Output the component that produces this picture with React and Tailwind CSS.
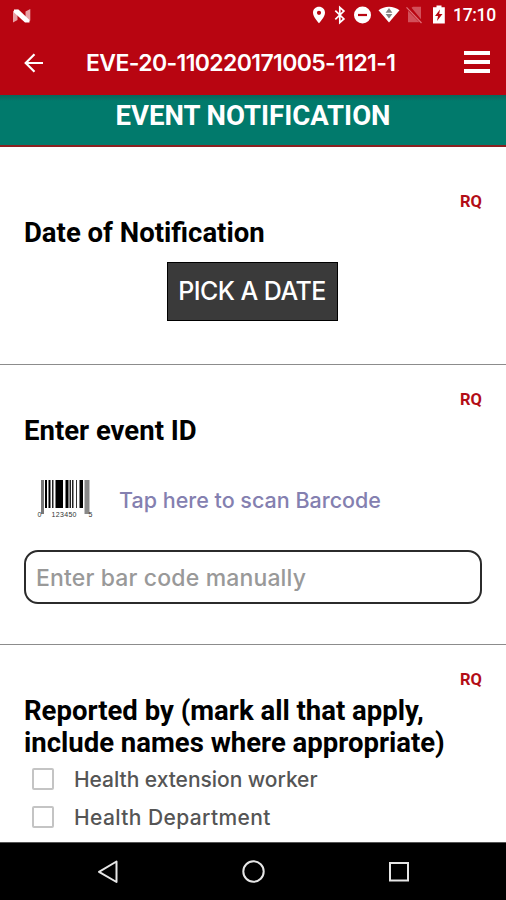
import React from "react";

function StatusBar() {
  return (
    <div className="flex h-[30px] items-center pl-[13px] text-white">
      <svg width="18" height="14" viewBox="0 0 18 14" className="mt-px">
        <path d="M0 2 4.500.5V11L0 13.500zM12.500 2.500l4.800-2.500v11.500l-4.800 1.500z" fill="#e8a0a5" />
        <path d="M1 .5h4.500L16.500 11v2.500H12L1 3.500z" fill="#fff" />
      </svg>
      <svg width="134" height="22" viewBox="312 4 134 22" className="ml-[281px]">
        <path d="M319 6.800c-3.400 0-6 2.600-6 5.900 0 4.300 6 10.500 6 10.500s6-6.200 6-10.500c0-3.300-2.600-5.900-6-5.900zm0 3.900a2.100 2.100 0 1 1 0 4.200 2.100 2.100 0 0 1 0-4.200z" fill="#fff" fillRule="evenodd" />
        <path d="M335.300 10.700l8.600 8.300-4.100 3.700V7.300l4.100 3.700-8.600 8.300" fill="none" stroke="#fff" strokeWidth="1.700" />
        <circle cx="362.500" cy="15" r="8.500" fill="#fff" />
        <rect x="358" y="13.900" width="9" height="2.200" fill="#b80511" />
        <path d="M378.500 10.200c6-4.700 15-4.700 21 0L389 22.500z" fill="#fff" />
        <path d="M389 8l3.400 4.800h-6.800zM389 18.500l3.400-4.500h-6.800z" fill="#858383" />
        <path d="M411.500 7.800l1.500-1h8v12.500zM408 10.800l11.500 11.400H408z" fill="#d2505a" />
        <path d="M406.500 7.300l15 15.700" stroke="#df7078" strokeWidth="1.200" />
        <path d="M433 7.300h3.500V5.500h5v1.800h3.300v16.200H433z" fill="#fff" />
        <path d="M440 9.500l-5 6.500h3l-1 5 5.500-7h-3.300z" fill="#b80511" />
      </svg>
      <span className="ml-[7px] font-['Roboto',sans-serif] text-[17.500px] font-medium leading-[30px] tracking-[-0.300px]">17:10</span>
    </div>
  );
}

function AppBar() {
  return (
    <div className="flex h-[65px] items-center pl-6 pr-4 text-white">
      <svg width="20" height="20" viewBox="0 0 20 20" fill="none" stroke="#fff" strokeWidth="2.200">
        <path d="M19 10H1.700M10.500 1.200L1.700 10l8.800 8.800" />
      </svg>
      <h1 className="ml-[42px] flex-1 whitespace-nowrap text-[23px] font-semibold leading-8 tracking-[-0.620px]">EVE-20-110220171005-1121-1</h1>
      <div className="-mt-0.5 flex w-[26px] flex-col gap-[5px]">
        <div className="h-1 bg-white" />
        <div className="h-1 bg-white" />
        <div className="h-1 bg-white" />
      </div>
    </div>
  );
}

function Required() {
  return <div className="text-right font-['Roboto',sans-serif] text-[16.500px] font-bold leading-5 text-[#b30d17]">RQ</div>;
}

function Question({ children }) {
  return <h2 className="whitespace-nowrap font-['Roboto',sans-serif] text-[27.500px] font-bold leading-[32px] text-black">{children}</h2>;
}

const bars = [
  [41, 3, 34, "#777"], [45, 2, 28, "#000"], [48.500, 2, 28, "#000"], [52, 1.500, 28, "#222"], [55.500, 7.500, 28, "#000"],
  [65.500, 3, 28, "#000"], [69.500, 1.500, 28, "#222"], [72, 1.500, 28, "#222"], [76, 1, 28, "#333"], [79.500, 3.500, 28, "#000"],
  [84.500, 5, 34, "#888"],
];

function Barcode() {
  return (
    <svg width="58" height="42" viewBox="37 479 58 42" className="font-['Liberation_Sans',sans-serif]">
      {bars.map(([x, w, h, fill]) => (
        <rect key={x} x={x} y="480" width={w} height={h} fill={fill} />
      ))}
      <g fill="#333" fontSize="7">
        <text x="37.500" y="517">0</text>
        <text x="51.500" y="517" textLength="25">123450</text>
        <text x="88.500" y="517">5</text>
      </g>
    </svg>
  );
}

function Option({ children, spacing }) {
  return (
    <label className="flex h-[38px] items-center pl-2">
      <span className="h-[22px] w-[22px] rounded-[2px] border-2 border-[#c4c4c4]" />
      <span className={`ml-5 whitespace-nowrap pt-px text-[21px] font-medium leading-[30px] text-[#555] ${spacing}`}>{children}</span>
    </label>
  );
}

function NavBar() {
  return (
    <div className="flex h-[58px] items-center border-t border-[#555] bg-black pl-[97px]">
      <svg width="314" height="24" viewBox="0 0 314 24" fill="none" stroke="#e6e6e6" strokeWidth="2">
        <path d="M19.500 1.500V22L2 11.800z" strokeLinejoin="round" />
        <circle cx="156.500" cy="11.500" r="10.200" />
        <rect x="293" y="3" width="18" height="17.500" />
      </svg>
    </div>
  );
}

export default function App() {
  return (
    <div className="flex h-[900px] w-[506px] flex-col overflow-hidden bg-white font-['Inter',sans-serif]">
      <header className="bg-[#b80511]">
        <StatusBar />
        <AppBar />
      </header>
      <div className="h-[52px] border-b-2 border-[#8c2020] bg-[#017a6c] bg-linear-to-b from-[#08665b] to-[#017a6c] to-[6px] pt-[5px] text-center">
        <div className="font-['Roboto',sans-serif] text-[27.500px] font-bold leading-8 text-white">EVENT NOTIFICATION</div>
      </div>
      <section className="h-[218px] border-b border-[#8c8c8c] px-6 pt-[45px]">
        <Required />
        <div className="mt-[5px]"><Question>Date of Notification</Question></div>
        <div className="mr-0.5 mt-[13px] flex justify-center">
          <button className="h-[59px] w-[171px] whitespace-nowrap border border-black bg-[#3a3a3a] text-[25px] font-medium tracking-[-0.550px] text-white">PICK A DATE</button>
        </div>
      </section>
      <section className="h-[280px] border-b border-[#8c8c8c] px-6 pt-[25px]">
        <Required />
        <div className="mt-[5px]"><Question>Enter event ID</Question></div>
        <div className="mt-[32px] flex h-[42px] items-center pl-[13px]">
          <Barcode />
          <span className="-mt-px ml-[24px] whitespace-nowrap text-[21.500px] font-medium leading-8 text-[#8480b0]">Tap here to scan Barcode</span>
        </div>
        <div className="mt-[29px] flex h-[54px] items-center rounded-[14px] border-2 border-[#2b2b2b] pl-[10px]">
          <span className="whitespace-nowrap pt-0.5 text-[23px] font-medium leading-8 tracking-[0.150px] text-[#999]">Enter bar code manually</span>
        </div>
      </section>
      <section className="flex-1 px-6 pt-[25px]">
        <Required />
        <div className="mt-[5px]"><Question>Reported by (mark all that apply,<br />include names where appropriate)</Question></div>
        <div className="mt-px">
          <Option spacing="tracking-[-0.040px]">Health extension worker</Option>
          <Option spacing="tracking-[0.400px]">Health Department</Option>
        </div>
      </section>
      <NavBar />
    </div>
  );
}
